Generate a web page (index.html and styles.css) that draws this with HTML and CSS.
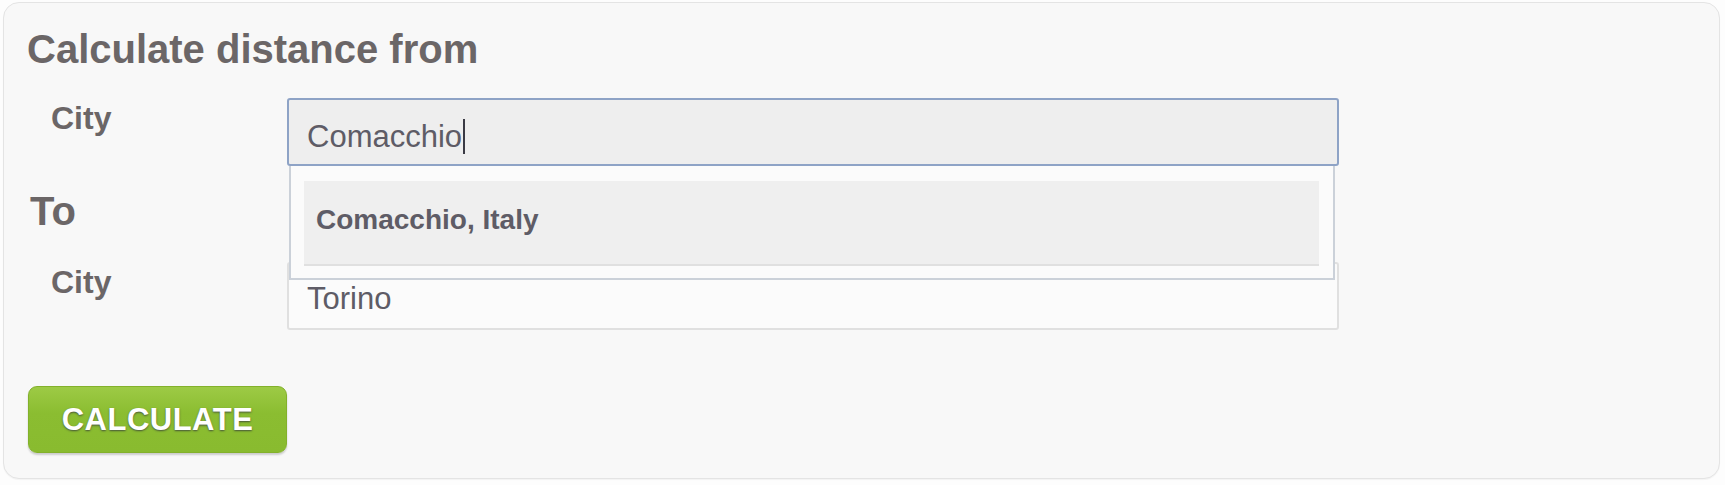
FILE: index.html
```html
<!DOCTYPE html>
<html>
<head>
<meta charset="utf-8">
<link rel="stylesheet" href="styles.css">
</head>
<body>
<div class="panel">
  <h2 class="title">Calculate distance from</h2>
  <div class="row">
    <div class="label">City</div>
    <div class="field">
      <div class="input focus">Comacchio<span class="caret"></span></div>
      <div class="dropdown">
        <div class="item">Comacchio, Italy</div>
      </div>
    </div>
  </div>
  <h2 class="title to">To</h2>
  <div class="row row2">
    <div class="label">City</div>
    <div class="field">
      <div class="input">Torino</div>
    </div>
  </div>
  <button class="btn">CALCULATE</button>
</div>
</body>
</html>
```

FILE: styles.css
```css
* { box-sizing: border-box; }
html, body { margin: 0; padding: 0; background: #fdfdfd; }
body {
  width: 1725px;
  height: 485px;
  padding: 2px 0 0 3px;
  font-family: "Liberation Sans", Arial, sans-serif;
}
.panel {
  width: 1717px;
  height: 477px;
  border: 1px solid #e4e4e4;
  border-radius: 16px;
  background: #f8f8f8;
  padding: 26px 0 0 23px;
  box-shadow: 0 1px 1px rgba(0,0,0,0.04);
}
.title {
  margin: 0;
  font-size: 40px;
  line-height: 40px;
  font-weight: bold;
  color: #6b6667;
}
.title.to {
  margin-top: 25px;
  padding-left: 3px;
}
.row {
  display: flex;
  margin-top: 29px;
  padding-left: 24px;
}
.row2 { margin-top: 31px; }
.label {
  width: 236px;
  flex: none;
  font-size: 32px;
  line-height: 32px;
  font-weight: bold;
  color: #6b6667;
  margin-top: 4px;
}
.field {
  position: relative;
  width: 1052px;
}
.input {
  height: 68px;
  border: 2px solid #e0e0e0;
  border-radius: 3px;
  background: #fbfbfb;
  padding: 19px 0 0 18px;
  font-size: 31px;
  line-height: 31px;
  color: #5e5c66;
}
.input.focus {
  border-color: #8ea3c6;
  background: #eeeeee;
}
.caret {
  display: inline-block;
  width: 2px;
  height: 35px;
  background: #3a3a44;
  vertical-align: -7px;
  margin-left: 1px;
}
.dropdown {
  position: absolute;
  top: 100%;
  left: 2px;
  width: 1046px;
  height: 114px;
  background: #fbfbfb;
  border: 2px solid #cbd1d9;
  border-top: none;
  padding: 15px 14px 0 13px;
  z-index: 2;
}
.item {
  height: 85px;
  background: #efefef;
  border-bottom: 2px solid #e0e0e0;
  padding: 25px 0 0 12px;
  font-size: 28px;
  line-height: 28px;
  font-weight: bold;
  color: #5e5c66;
}
.btn {
  display: block;
  margin: 56px 0 0 1px;
  width: 259px;
  height: 67px;
  border: 1px solid #83b12b;
  border-radius: 9px;
  background: linear-gradient(#9dca45, #8bbd31 40%, #89bb2f);
  box-shadow: 0 2px 2px rgba(0,0,0,0.18);
  padding: 0;
  font-family: "Liberation Sans", Arial, sans-serif;
  font-size: 31px;
  line-height: 65px;
  font-weight: bold;
  letter-spacing: 0.5px;
  color: #ffffff;
  text-align: center;
  text-shadow: 0 1px 2px rgba(40,40,60,0.7);
}
```
